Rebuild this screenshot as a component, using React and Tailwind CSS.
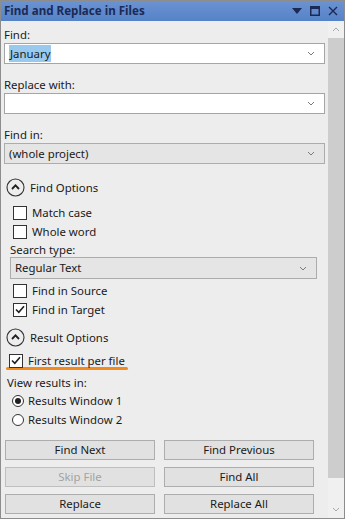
import React from "react";

const Chevron = () => (
  <svg width="8" height="5" viewBox="0 0 8 5" className="shrink-0">
    <polyline points="1,1 4,4 7,1" fill="none" stroke="#7a7a7a" strokeWidth="1" />
  </svg>
);

const Combo = ({ value, gray, className = "" }) => (
  <div
    className={`flex items-center justify-between pl-[4px] pr-[9px] border ${
      gray ? "bg-[#e5e5e5] border-[#acacac]" : "bg-white border-[#a5a5a5]"
    } ${className}`}
  >
    <span className="leading-none">{value}</span>
    <Chevron />
  </div>
);

const Check = ({ checked, label, className = "" }) => (
  <div className={`flex items-center h-[19px] ${className}`}>
    <div className="w-[14px] h-[14px] border border-[#333333] bg-white flex items-center justify-center">
      {checked && (
        <svg width="10" height="9" viewBox="0 0 10 9">
          <polyline points="1,4.5 3.8,7.3 9,1.2" fill="none" stroke="#1f1f1f" strokeWidth="1.6" />
        </svg>
      )}
    </div>
    <span className="ml-[5px]">{label}</span>
  </div>
);

const Section = ({ label, className = "" }) => (
  <div className={`flex items-center h-[19px] pl-[2px] ${className}`}>
    <svg width="19" height="19" viewBox="0 0 19 19">
      <circle cx="9.5" cy="9.5" r="8.5" fill="none" stroke="#333333" strokeWidth="1.1" />
      <polyline points="6,11 9.5,7.4 13,11" fill="none" stroke="#1f1f1f" strokeWidth="1.8" />
    </svg>
    <span className="ml-[5px]">{label}</span>
  </div>
);

const Radio = ({ checked, label }) => (
  <div className="flex items-center h-[19px] pl-[8px]">
    <div className="w-[12px] h-[12px] rounded-full border border-[#333333] bg-white flex items-center justify-center">
      {checked && <div className="w-[6px] h-[6px] rounded-full bg-[#1f1f1f]" />}
    </div>
    <span className="ml-[4px]">{label}</span>
  </div>
);

const Btn = ({ children, disabled }) => (
  <div
    className={`h-[20px] flex items-center justify-center border bg-[#e1e1e1] ${
      disabled ? "border-[#bfbfbf] text-[#a3a3a3]" : "border-[#adadad] text-[#1a1a1a]"
    }`}
  >
    {children}
  </div>
);

export default function App() {
  return (
    <div
      className="w-[345px] h-[519px] border border-[#8d8d8d] bg-[#ededed] flex flex-col text-[11.4px] text-[#1a1a1a] overflow-hidden"
      style={{ fontFamily: '"Noto Sans", "Open Sans", sans-serif' }}
    >
      <div className="h-[20px] shrink-0 bg-gradient-to-b from-[#6b93d3] to-[#5682c7] flex items-center justify-between pl-[3px] pr-[6px]">
        <span className="font-bold text-[#1b2a55] text-[11.6px] leading-none">Find and Replace in Files</span>
        <div className="flex items-center gap-[8px]">
          <svg width="10" height="6" viewBox="0 0 10 6">
            <polygon points="0,0 10,0 5,6" fill="#1b2a55" />
          </svg>
          <svg width="10" height="10" viewBox="0 0 10 10">
            <rect x="0.75" y="0.75" width="8.5" height="8.5" fill="none" stroke="#1b2a55" strokeWidth="1.5" />
            <rect x="0" y="0" width="10" height="3" fill="#1b2a55" />
          </svg>
          <svg width="10" height="10" viewBox="0 0 10 10">
            <path d="M1 1 L9 9 M9 1 L1 9" stroke="#1b2a55" strokeWidth="1.4" />
          </svg>
        </div>
      </div>
      <div className="flex flex-1 min-h-0">
        <div className="flex-1 pl-[3px] pr-[3px] pt-[6px]">
          <div className="h-[16px] leading-[16px]">Find:</div>
          <Combo
            value={<span className="bg-[#99c9ef] px-[1px] py-[1px]">January</span>}
            className="h-[21px] pl-[3px]"
          />
          <div className="h-[17px] leading-[17px] mt-[12px]">Replace with:</div>
          <Combo value="" className="h-[21px]" />
          <div className="h-[17px] leading-[17px] mt-[12px]">Find in:</div>
          <Combo value="(whole project)" gray className="h-[21px]" />

          <Section label="Find Options" className="mt-[14px]" />
          <div className="pl-[6px] mt-[6px]">
            <Check label="Match case" className="pl-[3px]" />
            <Check label="Whole word" className="pl-[3px]" />
            <div className="h-[16px] leading-[16px] mt-[1px]">Search type:</div>
            <Combo value="Regular Text" gray className="h-[22px] w-[307px] mt-[-1px]" />
            <Check label="Find in Source" className="pl-[3px] mt-[2px]" />
            <Check label="Find in Target" checked className="pl-[3px]" />
          </div>

          <Section label="Result Options" className="mt-[9px]" />
          <div className="pl-[5px] mt-[4px] w-fit">
            <Check label="First result per file" checked />
            <div className="h-[3px] rounded-full bg-[#f28a1d] mt-[-3px] ml-[-3px] mr-[-3px]" />
          </div>
          <div className="h-[16px] leading-[16px] mt-[5px] pl-[3px]">View results in:</div>
          <div>
            <Radio checked label="Results Window 1" />
            <Radio label="Results Window 2" />
          </div>

          <div className="grid grid-cols-[150px_150px] gap-x-[9px] gap-y-[7px] pl-[1px] mt-[11px]">
            <Btn>Find Next</Btn>
            <Btn>Find Previous</Btn>
            <Btn disabled>Skip File</Btn>
            <Btn>Find All</Btn>
            <Btn>Replace</Btn>
            <Btn>Replace All</Btn>
          </div>
        </div>
        <div className="w-[16px] shrink-0 bg-[#f0f0f0] flex flex-col items-center">
          <div className="h-[17px] w-full flex items-center justify-center">
            <svg width="8" height="5" viewBox="0 0 8 5">
              <polyline points="1,4 4,1 7,4" fill="none" stroke="#a8a8a8" strokeWidth="1" />
            </svg>
          </div>
          <div className="w-full h-[440px] bg-[#cdcdcd]" />
          <div className="flex-1" />
          <div className="h-[17px] w-full flex items-center justify-center">
            <svg width="8" height="5" viewBox="0 0 8 5">
              <polyline points="1,1 4,4 7,1" fill="none" stroke="#a8a8a8" strokeWidth="1" />
            </svg>
          </div>
        </div>
      </div>
    </div>
  );
}
